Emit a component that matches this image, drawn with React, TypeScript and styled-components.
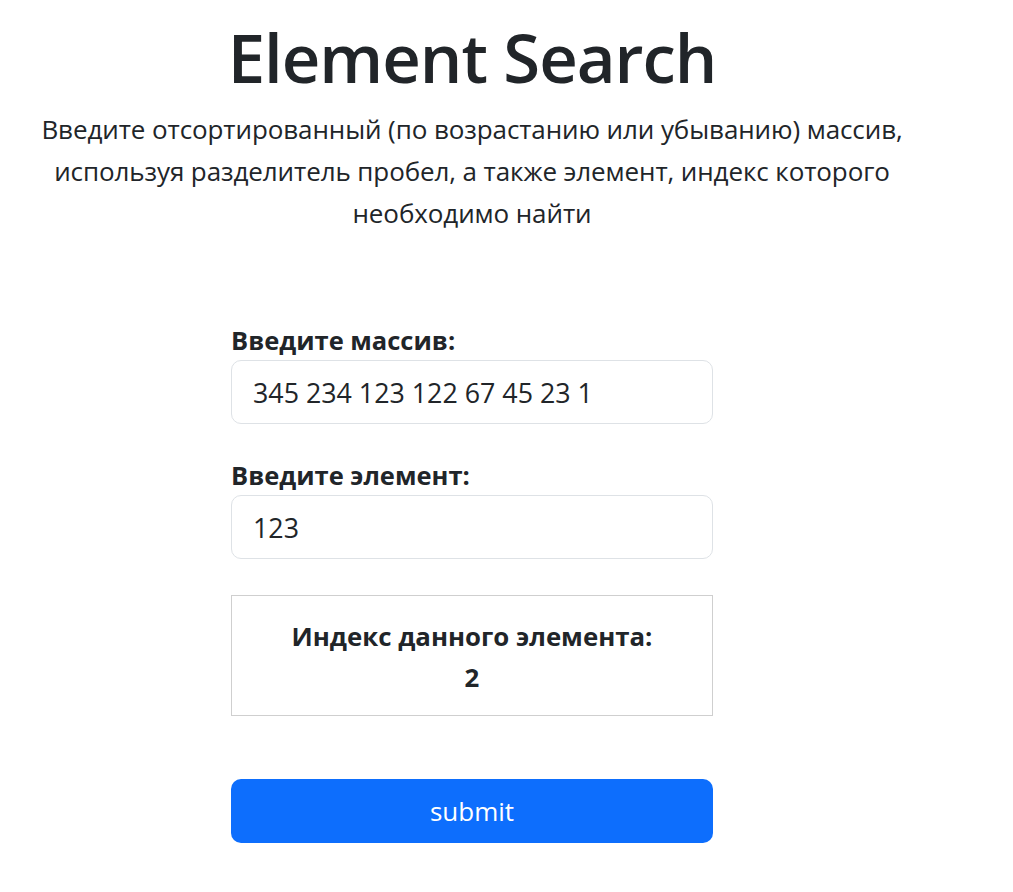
import React from "react";
import styled, { createGlobalStyle } from "styled-components";

const GlobalStyle = createGlobalStyle`
  html, body { margin: 0; padding: 0; background: #ffffff; }
  body {
    font-family: "Open Sans", "Noto Sans", "Liberation Sans", sans-serif;
    color: #212529;
  }
  * { box-sizing: border-box; }
`;

const Page = styled.main`
  width: 944px;
  display: flex;
  flex-direction: column;
  align-items: center;
  padding-top: 16px;
`;

const Title = styled.h1`
  margin: 0;
  font-size: 67px;
  font-weight: 600;
  line-height: 82px;
  color: #212529;
  letter-spacing: -1px;
`;

const Lead = styled.p`
  margin: 10px 0 0;
  font-size: 26px;
  line-height: 42px;
  text-align: center;
  font-weight: 400;
  letter-spacing: -0.1px;
`;

const Form = styled.form`
  width: 482px;
  margin-top: 90px;
  display: flex;
  flex-direction: column;
`;

const Field = styled.div`
  display: flex;
  flex-direction: column;
  margin-bottom: 35px;
`;

const Label = styled.label`
  font-size: 25.5px;
  font-weight: 700;
  line-height: 32px;
  margin-bottom: 4px;
`;

const Input = styled.input`
  width: 100%;
  height: 64px;
  border: 1px solid #dee2e6;
  border-radius: 10px;
  padding: 0 21px;
  font-family: inherit;
  font-size: 26.8px;
  color: #212529;
  background: #fff;
  outline: none;
`;

const ResultBox = styled.div`
  margin-top: 1px;
  height: 121px;
  border: 1px solid #cfcfcf;
  display: flex;
  flex-direction: column;
  align-items: center;
  justify-content: center;
  font-size: 25.8px;
  font-weight: 700;
  line-height: 41px;
  padding-top: 2px;
`;

const SubmitButton = styled.button`
  margin-top: 63px;
  height: 64px;
  width: 100%;
  border: none;
  border-radius: 10px;
  background: #0d6efd;
  color: #ffffff;
  font-family: inherit;
  font-size: 26px;
  cursor: pointer;
`;

export default function App() {
  return (
    <>
      <GlobalStyle />
      <Page>
        <Title>Element Search</Title>
        <Lead>
          Введите отсортированный (по возрастанию или убыванию) массив,
          <br />
          используя разделитель пробел, а также элемент, индекс которого
          <br />
          необходимо найти
        </Lead>
        <Form onSubmit={(e) => e.preventDefault()}>
          <Field>
            <Label htmlFor="arr">Введите массив:</Label>
            <Input id="arr" defaultValue="345 234 123 122 67 45 23 1" />
          </Field>
          <Field>
            <Label htmlFor="el">Введите элемент:</Label>
            <Input id="el" defaultValue="123" />
          </Field>
          <ResultBox>
            <div>Индекс данного элемента:</div>
            <div>2</div>
          </ResultBox>
          <SubmitButton type="submit">submit</SubmitButton>
        </Form>
      </Page>
    </>
  );
}
